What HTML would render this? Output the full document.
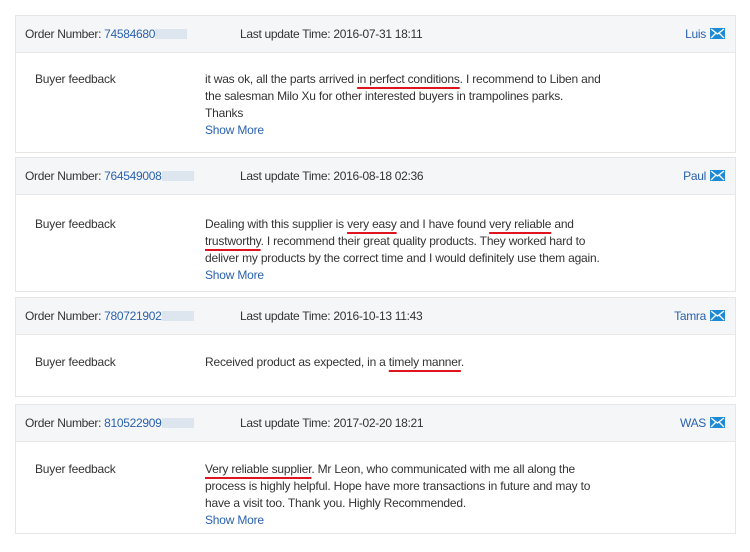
<!DOCTYPE html>
<html><head><meta charset="utf-8"><style>
body{margin:0;width:750px;height:552px;background:#fff;font-family:"Liberation Sans",Arial,sans-serif;font-size:12px;color:#333;position:relative;overflow:hidden}
.card{position:absolute;left:15px;width:719px;border:1px solid #e6e6e6;background:#fff}
.hd{height:36px;background:#f5f6f8;border-bottom:1px solid #e8e8e8;position:relative;letter-spacing:-0.3px}
.hd span{position:absolute;top:11px;white-space:nowrap}
.on{left:9px}.lu{left:224px}
.b{color:#2a62ad}
.blur{display:inline-block;width:32px;height:10px;background:#dde5ee;vertical-align:-1px}
.nm{right:10px;color:#2a62ad}
.env{display:inline-block;width:15px;height:11px;background:#1e8ad6;vertical-align:-1px;margin-left:4px;position:relative}
.env svg{position:absolute;left:0;top:0}
.t{position:absolute;white-space:nowrap;line-height:17px;letter-spacing:-0.2px}
.bf{left:19px}
.fb{left:189px}
.sm{color:#2a62ad}
.u{text-decoration:underline;text-decoration-color:#e0141e;text-decoration-thickness:2px;text-underline-offset:4px}
</style></head><body>

<div class="card" style="top:15px;height:136px">
<div class="hd"><span class="on">Order Number: <span class="b" style="position:static">74584680</span><i class="blur"></i></span><span class="lu">Last update Time: 2016-07-31 18:11</span><span class="nm">Luis<i class="env"><svg width="15" height="11"><path d="M1 1L7.5 6L14 1M1 10L6 5M14 10L9 5" stroke="#fff" stroke-width="1.3" fill="none"/></svg></i></span></div>
<div class="t bf" style="top:55px">Buyer feedback</div>
<div class="t fb" style="top:55px">it was ok, all the parts arrived <span class="u">in perfect conditions</span>. I recommend to Liben and<br>the salesman Milo Xu for other interested buyers in trampolines parks.<br>Thanks<br><span class="sm">Show More</span></div>
</div>

<div class="card" style="top:157px;height:133px">
<div class="hd"><span class="on">Order Number: <span class="b" style="position:static">764549008</span><i class="blur"></i></span><span class="lu">Last update Time: 2016-08-18 02:36</span><span class="nm">Paul<i class="env"><svg width="15" height="11"><path d="M1 1L7.5 6L14 1M1 10L6 5M14 10L9 5" stroke="#fff" stroke-width="1.3" fill="none"/></svg></i></span></div>
<div class="t bf" style="top:58px">Buyer feedback</div>
<div class="t fb" style="top:58px">Dealing with this supplier is <span class="u">very easy</span> and I have found <span class="u">very reliable</span> and<br><span class="u">trustworthy</span>. I recommend their great quality products. They worked hard to<br>deliver my products by the correct time and I would definitely use them again.<br><span class="sm">Show More</span></div>
</div>

<div class="card" style="top:297px;height:98px">
<div class="hd"><span class="on">Order Number: <span class="b" style="position:static">780721902</span><i class="blur"></i></span><span class="lu">Last update Time: 2016-10-13 11:43</span><span class="nm">Tamra<i class="env"><svg width="15" height="11"><path d="M1 1L7.5 6L14 1M1 10L6 5M14 10L9 5" stroke="#fff" stroke-width="1.3" fill="none"/></svg></i></span></div>
<div class="t bf" style="top:56px">Buyer feedback</div>
<div class="t fb" style="top:56px">Received product as expected, in a <span class="u">timely manner</span>.</div>
</div>

<div class="card" style="top:404px;height:128px">
<div class="hd"><span class="on">Order Number: <span class="b" style="position:static">810522909</span><i class="blur"></i></span><span class="lu">Last update Time: 2017-02-20 18:21</span><span class="nm">WAS<i class="env"><svg width="15" height="11"><path d="M1 1L7.5 6L14 1M1 10L6 5M14 10L9 5" stroke="#fff" stroke-width="1.3" fill="none"/></svg></i></span></div>
<div class="t bf" style="top:56px">Buyer feedback</div>
<div class="t fb" style="top:56px"><span class="u">Very reliable supplier</span>. Mr Leon, who communicated with me all along the<br>process is highly helpful. Hope have more transactions in future and may to<br>have a visit too. Thank you. Highly Recommended.<br><span class="sm">Show More</span></div>
</div>
</body></html>
